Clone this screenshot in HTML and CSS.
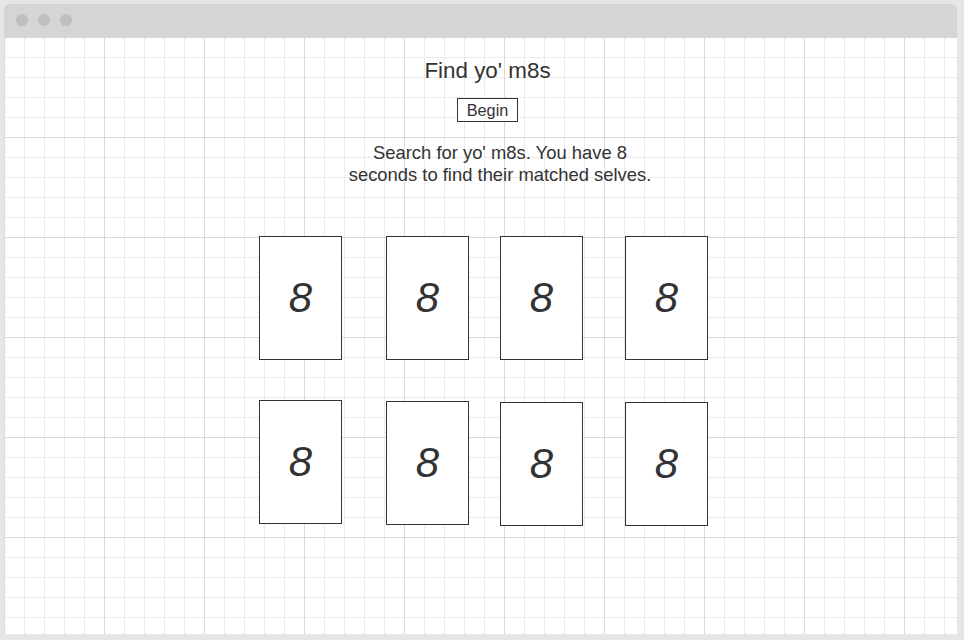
FILE: index.html
```html
<!DOCTYPE html>
<html lang="en">
<head>
<meta charset="utf-8">
<title>Find yo' m8s</title>
<link rel="stylesheet" href="styles.css">
</head>
<body>
<div class="window">
  <div class="titlebar">
    <span class="dot"></span><span class="dot"></span><span class="dot"></span>
  </div>
  <main class="content">
    <h1 class="title">Find yo' m8s</h1>
    <div class="actions"><button class="begin" type="button">Begin</button></div>
    <p class="desc">Search for yo' m8s. You have 8 seconds to find their matched selves.</p>
    <div class="board">
      <div class="card">8</div>
      <div class="card">8</div>
      <div class="card">8</div>
      <div class="card">8</div>
      <div class="card">8</div>
      <div class="card shift1">8</div>
      <div class="card shift2">8</div>
      <div class="card shift2">8</div>
    </div>
  </main>
</div>
</body>
</html>
```

FILE: styles.css
```css
* { box-sizing: border-box; }
html, body { margin: 0; height: 100%; }
body {
  background: #e6e6e6;
  padding: 4px 7px 6px 4px;
  font-family: "Liberation Sans", Arial, sans-serif;
  color: #333;
}
.window {
  height: 630px;
  display: flex;
  flex-direction: column;
  border-radius: 5px 5px 0 0;
  overflow: hidden;
  background: #fff;
}
.titlebar {
  height: 33px;
  flex: none;
  background: #d5d5d5;
  display: flex;
  align-items: center;
  gap: 10px;
  padding-left: 12px;
  padding-bottom: 1px;
}
.dot {
  width: 12px;
  height: 12px;
  border-radius: 50%;
  background: #bfbfbf;
}
.content {
  flex: 1;
  background-color: #fff;
  background-image:
    linear-gradient(to right, #d9d9d9 1px, transparent 1px),
    linear-gradient(to bottom, #d9d9d9 1px, transparent 1px),
    linear-gradient(to right, #ebebeb 1px, transparent 1px),
    linear-gradient(to bottom, #ebebeb 1px, transparent 1px);
  background-size: 100px 100px, 100px 100px, 20px 20px, 20px 20px;
  padding-top: 21px;
  padding-left: 14px;
}
.title {
  margin: 0;
  font-size: 22.4px;
  font-weight: normal;
  line-height: 25px;
  text-align: center;
}
.actions {
  margin-top: 15px;
  text-align: center;
}
.begin {
  font-family: "Liberation Sans", Arial, sans-serif;
  font-size: 16.3px;
  line-height: 18px;
  color: #333;
  background: #fff;
  border: 1px solid #333;
  border-radius: 0;
  padding: 2px 9px;
  margin: 0;
}
.desc {
  width: 345px;
  padding-left: 25px;
  margin: 20px auto 0;
  font-size: 18.4px;
  line-height: 21.5px;
  text-align: center;
}
.board {
  margin-top: 51px;
  margin-left: 241px;
  display: grid;
  grid-template-columns: 127px 114px 125px 83px;
  row-gap: 40px;
  align-items: start;
}
.card {
  width: 83px;
  height: 124px;
  border: 1px solid #333;
  background: #fff;
  display: flex;
  align-items: center;
  justify-content: center;
  font-size: 42px;
  font-style: italic;
  color: #333;
}
.shift1 { margin-top: 1px; }
.shift2 { margin-top: 2px; }
```
